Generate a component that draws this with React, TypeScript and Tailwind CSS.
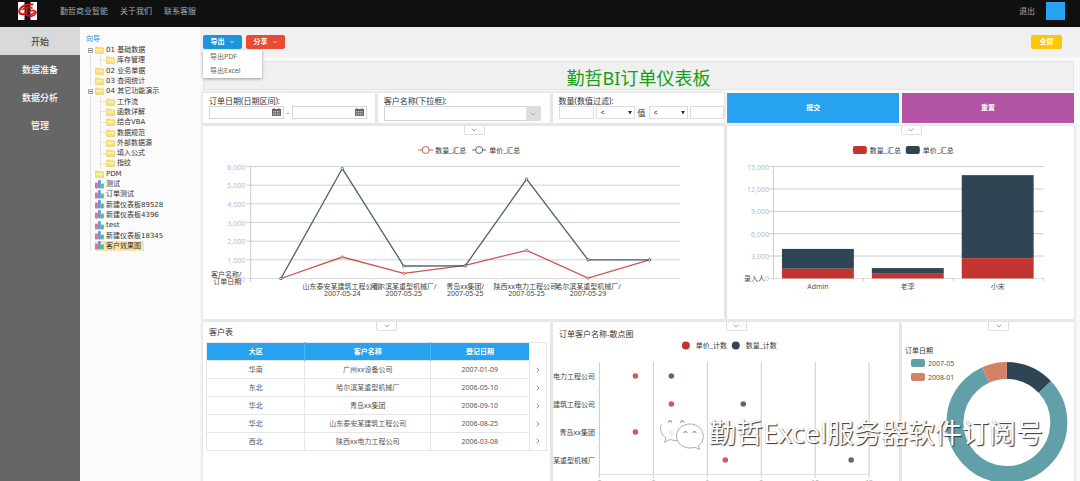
import React, { useState } from 'react';
import { ChevronDown, ChevronRight } from 'lucide-react';

const RED = '#c23531';
const NAVY = '#2f4554';
const TEAL = '#61a0a8';
const ORANGE = '#d48265';

type TreeNode = { label: string; level: 1 | 2; icon: 'folder' | 'chart'; open?: boolean; active?: boolean };

const tree: TreeNode[] = [
    { label: '01 基础数据', level: 1, icon: 'folder', open: true },
    { label: '库存管理', level: 2, icon: 'folder' },
    { label: '02 业务单据', level: 1, icon: 'folder' },
    { label: '03 查阅统计', level: 1, icon: 'folder' },
    { label: '04 其它功能演示', level: 1, icon: 'folder', open: true },
    { label: '工作流', level: 2, icon: 'folder' },
    { label: '函数详解', level: 2, icon: 'folder' },
    { label: '结合VBA', level: 2, icon: 'folder' },
    { label: '数据规范', level: 2, icon: 'folder' },
    { label: '外部数据源', level: 2, icon: 'folder' },
    { label: '填入公式', level: 2, icon: 'folder' },
    { label: '指纹', level: 2, icon: 'folder' },
    { label: 'PDM', level: 1, icon: 'folder' },
    { label: '测试', level: 1, icon: 'chart' },
    { label: '订单测试', level: 1, icon: 'chart' },
    { label: '新建仪表板89528', level: 1, icon: 'chart' },
    { label: '新建仪表板4396', level: 1, icon: 'chart' },
    { label: 'test', level: 1, icon: 'chart' },
    { label: '新建仪表板18345', level: 1, icon: 'chart' },
    { label: '客户效果图', level: 1, icon: 'chart', active: true },
];

const customers = [
    ['华南', '广州xx设备公司', '2007-01-09'],
    ['东北', '哈尔滨某重型机械厂', '2006-05-10'],
    ['华北', '青岛xx集团', '2006-09-10'],
    ['华北', '山东泰安某建筑工程公司', '2006-08-25'],
    ['西北', '陕西xx电力工程公司', '2006-03-08'],
];

const Logo = () => (
    <svg width="20" height="20" viewBox="0 0 20 20" aria-label="logo">
        <path d="M0 1h6.500v18H0zM12.500 1H19v18h-6.500z" fill="#fff" />
        <g fill="none" stroke="#e01313" strokeLinecap="round">
            <path d="M14.500 3.500C9 2 1.500 6 1.200 10.500c-.1 3 4 3.300 7.300 1.500" strokeWidth="2" />
            <path d="M4.500 8.500C7 6.500 11 6 14 7M9.500 7.500C7 11 8 15.500 11.500 14.500c2.500-.8 3.500-3 6.500-3.500" strokeWidth="1.600" />
            <path d="M11 10.500c2.500-1.500 6-1.500 7 .5-.2 2.500-3 4.500-6 4.500" strokeWidth="1.600" />
        </g>
    </svg>
);

const FolderIcon = () => (
    <svg className="shrink-0" width="9" height="8" viewBox="0 0 9 8">
        <path d="M.5 1h3l.7.8h4.300v5.700h-8z" fill="#f8e07a" stroke="#e8ca5c" strokeWidth=".6" />
        <path d="M1 3h7v1.800H1z" fill="#fdf0a8" />
    </svg>
);

const ChartIcon = () => (
    <svg className="shrink-0" width="9" height="9" viewBox="0 0 9 9">
        <rect x="0" y="2.500" width="2.800" height="6" rx=".8" fill="#ea6a80" />
        <rect x="3" y="0" width="2.800" height="8.500" rx=".8" fill="#5b9be2" />
        <rect x="6" y="3.500" width="2.800" height="5" rx=".8" fill="#4cc66c" />
    </svg>
);

const CalendarIcon = () => (
    <svg className="absolute right-[3px] top-[2px] pointer-events-none" width="9" height="8" viewBox="0 0 9 8">
        <path d="M0 1h1.500V0h1v1h4V0h1v1H9v7H0z" fill="#666" />
        <path d="M1 3.500h7M1 5.200h7M1 6.800h7" stroke="#ccc" strokeWidth=".9" strokeDasharray="1.200 .6" />
    </svg>
);

const Panel = ({ className = '', collapse = true, children }: any) => (
    <section className={`relative min-w-0 bg-white shadow-[0_0_3px_1px_#dcdcdc] ${className}`}>
        {collapse && (
            <button aria-label="collapse" className="absolute left-1/2 top-0 w-[21px] h-[9px] bg-white border border-t-0 border-[#dedede] rounded-b-xs flex items-center justify-center text-[#777]">
                <ChevronDown size={8} />
            </button>
        )}
        {children}
    </section>
);

const DateInput = ({ id, label }: { id: string; label?: string }) => (
    <div className="relative flex-1 min-w-0">
        <input id={id} aria-label={label} type="text" className="block w-full h-[13px] bg-white border border-[#d5d5d5] px-1 outline-none" />
        <CalendarIcon />
    </div>
);

const CompareSelect = ({ label }: { label: string }) => (
    <div className="relative w-[39px] shrink-0">
        <select aria-label={label} className="block appearance-none w-full h-[13px] bg-white border border-[#ddd] pl-[4px] text-[7px] leading-[11px] outline-none">
            <option>&lt;</option>
            <option>&gt;</option>
            <option>=</option>
        </select>
        <svg className="absolute right-[3px] top-[5px] pointer-events-none" width="4" height="4" viewBox="0 0 4 4">
            <path d="M0 0h4L2 3.500z" fill="#333" />
        </svg>
    </div>
);

const lineX = (i: number) => 47 + (430 / 7) * (i + 0.5);
const lineY = (v: number) => 152.5 - (v / 6000) * 112;

const LineChart = () => {
    const series = [
        { color: RED, values: [0, 1150, 270, 700, 1510, 20, 1000] },
        { color: NAVY, values: [0, 5890, 670, 680, 5320, 1000, 1000] },
    ];
    const labels = [
        ['山东泰安某建筑工程公司/', '2007-05-24'],
        ['哈尔滨某重型机械厂/', '2007-05-25'],
        ['青岛xx集团/', '2007-05-25'],
        ['陕西xx电力工程公司/', '2007-05-25'],
        ['哈尔滨某重型机械厂/', '2007-05-29'],
    ];
    return (
        <svg viewBox="0 0 521 193" className="block w-full h-full text-[7px]">
            {[0, 1, 2, 3, 4, 5, 6].map((n) => (
                <g key={n}>
                    <path d={`M43 ${lineY(n * 1000)}H477`} stroke={n ? '#ccd2d6' : '#ddd'} />
                    <text x="42" y={lineY(n * 1000) + 3} textAnchor="end" fill="#bbb">{n ? `${n},000` : '0'}</text>
                </g>
            ))}
            <path d="M47.500 40V156" stroke="#ccc" />
            {[1, 2, 3, 4, 5, 6].map((n) => (
                <path key={n} d={`M${47 + (430 / 7) * n} 152v3`} stroke="#ddd" />
            ))}
            {series.map((s) => (
                <g key={s.color} stroke={s.color}>
                    <polyline points={s.values.map((v, i) => `${lineX(i)},${lineY(v)}`).join(' ')} fill="none" strokeWidth="1.300" strokeOpacity=".85" />
                    {s.values.map((v, i) => (
                        <circle key={i} cx={lineX(i)} cy={lineY(v)} r="1.200" fill="#fff" strokeWidth=".7" />
                    ))}
                </g>
            ))}
            <g textAnchor="middle" fill="#444">
                <text x="23" y="151">客户名称/</text>
                <text x="24" y="158">订单日期</text>
                {labels.map((l, i) => (
                    <g key={i}>
                        <text x={lineX(i + 1)} y="163">{l[0]}</text>
                        <text x={lineX(i + 1)} y="170">{l[1]}</text>
                    </g>
                ))}
            </g>
            <path d="M215 24h15" stroke={RED} strokeWidth=".8" />
            <circle cx="222.500" cy="24" r="3.500" fill="#fff" stroke={RED} strokeWidth=".8" />
            <path d="M269 24h14" stroke={NAVY} strokeWidth=".8" />
            <circle cx="276" cy="24" r="3.500" fill="#fff" stroke={NAVY} strokeWidth=".8" />
            <g fill="#333">
                <text x="232" y="27">数量_汇总</text>
                <text x="286" y="27">单价_汇总</text>
            </g>
        </svg>
    );
};

const barY = (v: number) => 152.5 - (v / 15000) * 112;

const BarChart = () => {
    const bars = [
        { name: 'Admin', qty: 1300, total: 3960 },
        { name: '老李', qty: 720, total: 1390 },
        { name: '小宋', qty: 2720, total: 13850 },
    ];
    return (
        <svg viewBox="0 0 347 193" className="block w-full h-full text-[7px]">
            {[0, 3, 6, 9, 12, 15].map((n) => (
                <g key={n}>
                    <path d={`M42 ${barY(n * 1000)}H317`} stroke={n ? '#ccc' : '#ddd'} />
                    <text x="42" y={barY(n * 1000) + 3} textAnchor="end" fill="#bbb">{n ? `${n},000` : '0'}</text>
                </g>
            ))}
            <path d="M46.500 40v114M136.500 152v3M226.500 152v3M316.500 152v3" stroke="#ccc" />
            {bars.map((b, i) => (
                <g key={b.name}>
                    <rect x={55 + i * 90} width="72" y={barY(b.total)} height={barY(b.qty) - barY(b.total)} fill={NAVY} />
                    <rect x={55 + i * 90} width="72" y={barY(b.qty)} height={152.5 - barY(b.qty)} fill={RED} />
                    <text x={91 + i * 90} y="163" textAnchor="middle" fill="#555">{b.name}</text>
                </g>
            ))}
            <text x="38" y="155" textAnchor="end" fill="#444">录入人</text>
            <rect x="126" y="20" width="14" height="8" rx="2" fill={RED} />
            <rect x="179" y="20" width="14" height="8" rx="2" fill={NAVY} />
            <g fill="#333">
                <text x="143" y="27">数量_汇总</text>
                <text x="196" y="27">单价_汇总</text>
            </g>
        </svg>
    );
};

const ScatterChart = () => {
    const rows = [
        { name: '电力工程公司', price: 2, qty: 4 },
        { name: '建筑工程公司', price: 4, qty: 8 },
        { name: '青岛xx集团', price: 2, qty: 4 },
        { name: '某重型机械厂', price: 7, qty: 14 },
    ];
    return (
        <svg viewBox="0 0 347 200" className="block w-full h-full text-[7px]">
            {[0, 3, 6, 9, 12, 15].map((n) => (
                <g key={n}>
                    <path d={`M${46.5 + n * 18} 40V156`} stroke="#ccc" />
                    <text x={46.5 + n * 18} y="163" textAnchor="middle" fill="#aaa">{n}</text>
                </g>
            ))}
            <path d="M44 152.500H317M44 68.500h3M44 96.500h3M44 124.500h3" stroke="#ddd" />
            {rows.map((r, i) => (
                <g key={r.name}>
                    <text x="42" y={57 + i * 28} textAnchor="end" fill="#444">{r.name}</text>
                    <circle cx={46.5 + r.qty * 18} cy={54 + i * 28} r="2.800" fill={NAVY} fillOpacity=".8" />
                    <circle cx={46.5 + r.price * 18} cy={54 + i * 28} r="2.800" fill={RED} fillOpacity=".8" />
                </g>
            ))}
            <text x="6" y="15" fontSize="8" fill="#333">订单客户名称-散点图</text>
            <circle cx="133" cy="23.500" r="4" fill={RED} />
            <circle cx="183" cy="23.500" r="4" fill={NAVY} />
            <g fill="#333">
                <text x="143" y="26">单价_计数</text>
                <text x="193" y="26">数量_计数</text>
            </g>
        </svg>
    );
};

const DonutChart = () => {
    const slices = [
        { color: NAVY, from: 0, deg: 47 },
        { color: TEAL, from: 47, deg: 289 },
        { color: ORANGE, from: 336, deg: 24 },
    ];
    return (
        <svg viewBox="0 0 172 200" className="block w-full h-full text-[7px]">
            {slices.map((s) => (
                <circle key={s.color} cx="105" cy="100.500" r="52" fill="none" stroke={s.color} strokeWidth="17" pathLength="360" strokeDasharray={`${s.deg} ${360 - s.deg}`} transform={`rotate(${s.from - 90} 105 100.5)`} />
            ))}
            <text x="3" y="31" fill="#333">订单日期</text>
            <rect x="9" y="37" width="14" height="8" rx="2" fill={TEAL} />
            <rect x="9" y="51" width="14" height="8" rx="2" fill={ORANGE} />
            <g fill="#555">
                <text x="26" y="44">2007-05</text>
                <text x="26" y="58">2008-01</text>
            </g>
        </svg>
    );
};

const Watermark = () => (
    <div className="absolute left-[659px] top-[413px] flex items-center gap-[5px] pointer-events-none">
        <svg width="45" height="38" viewBox="0 0 45 38">
            <g stroke="#999" strokeWidth=".8" strokeLinejoin="round">
                <path d="M17 2C8 2 1.500 7.500 1.500 14.500c0 4 2 7 5.500 9.500l-1.500 4.500 5.500-3c2 .6 4 1 6 1C26 26.500 32.500 21 32.500 14S26 2 17 2z" fill="#fff" strokeDasharray="0 18 48 60" />
                <circle cx="12.500" cy="19" r="2.500" fill="#eee" stroke="none" />
                <path d="M31 10c-7.500 0-13.500 5-13.500 12S23.500 34 31 34c1.700 0 3.300-.3 5-.8l4.500 2.300-1.200-3.800c3-2.200 5-5.500 5-9.200C44.300 15 38 10 31 10z" fill="#fff" />
            </g>
            <g fill="none" stroke="#777" strokeWidth="1">
                <path d="M9.500 8.500a1.700 1.700 0 0 1 3.400 0M21.500 8.500a1.700 1.700 0 0 1 3.400 0M25 19a1.500 1.500 0 0 1 3 0M34 19a1.500 1.500 0 0 1 3 0" />
            </g>
        </svg>
        <span className="text-[27px] leading-[40px] text-white whitespace-nowrap [text-shadow:1px_1px_1px_#333,0_0_1px_#aaa]">勤哲Excel服务器软件订阅号</span>
    </div>
);

const App = () => {
    const [menuOpen, setMenuOpen] = useState(true);
    const [section, setSection] = useState('开始');

    return (
        <div lang="zh-CN" className="relative h-screen overflow-hidden flex flex-col bg-white text-[7px] text-[#333] font-['Noto_Sans','Noto_Sans_CJK_SC',sans-serif]">
            <header className="h-[27px] shrink-0 bg-[#101010] text-[#a8a8a8] text-[8px] leading-[10px] flex items-center pb-[6px] pl-[18px] pr-[15px]">
                <Logo />
                <nav className="flex gap-3 ml-[22px]">
                    <a href="#bi">勤哲商业智能</a>
                    <a href="#about">关于我们</a>
                    <a href="#contact">联系客服</a>
                </nav>
                <a href="#logout" className="ml-auto mr-[11px]">退出</a>
                <div className="w-[19px] h-[18px] bg-[#27a2f0]"></div>
            </header>

            <div className="flex flex-1 min-h-0">
                <nav className="w-[80px] shrink-0 bg-[#666] flex flex-col text-[9px] font-medium text-white">
                    {['开始', '数据准备', '数据分析', '管理'].map((s) => (
                        <button key={s} onClick={() => setSection(s)} className={`h-[28px] pt-px cursor-pointer ${s === section ? 'bg-[#d9d9d9] text-[#444]' : ''}`}>{s}</button>
                    ))}
                </nav>

                <aside className="w-[120px] shrink-0 bg-[#fbfbfb] pl-[6px] pt-[6px] font-['DejaVu_Sans','Noto_Sans_CJK_SC',sans-serif]">
                    <div className="leading-[12px] text-[#1b95e0]">向导</div>
                    <ul className="grid auto-rows-fr h-[206px]">
                        {tree.map((n) => (
                            <li key={n.label} className="flex items-stretch leading-[10px] whitespace-nowrap">
                                <span className="w-[9px] shrink-0 flex items-center">
                                    {n.open ? (
                                        <span className="w-[5px] h-[5px] ml-[2px] border border-[#aaa] flex items-center"><span className="w-full h-px bg-[#777]"></span></span>
                                    ) : (
                                        <span className="ml-1 h-full w-px bg-[#e2e2e2]"></span>
                                    )}
                                </span>
                                {n.level === 2 && (
                                    <span className="w-[11px] shrink-0 flex items-center">
                                        <span className="ml-[5px] h-full w-px bg-[#e2e2e2]"></span>
                                        <span className="flex-1 h-px bg-[#e2e2e2]"></span>
                                    </span>
                                )}
                                <a href="#node" className={`flex items-center gap-[2px] pr-[3px] ${n.active ? 'bg-[#fde3a7]' : ''}`}>
                                    {n.icon === 'folder' ? <FolderIcon /> : <ChartIcon />}
                                    {n.label}
                                </a>
                            </li>
                        ))}
                    </ul>
                </aside>

                <main className="flex-1 min-w-0 bg-[#fafafa]">
                    <div className="h-[30px] bg-[#f0f0f0] pl-[3px] pr-[18px] pt-2 flex items-start gap-1 text-white font-bold">
                        <div className="relative">
                            <button onClick={() => setMenuOpen(!menuOpen)} className="h-[14px] w-[39px] bg-[#1b95e0] rounded-xs flex items-center justify-center gap-1">
                                导出 <ChevronDown size={6} strokeWidth={3} />
                            </button>
                            {menuOpen && (
                                <ul className="absolute z-10 left-0 top-[15px] w-[59px] bg-white shadow-[0_1px_3px_#999] font-normal text-[#666]">
                                    <li className="h-[14px]"><button className="pl-[7px] leading-[14px]">导出PDF</button></li>
                                    <li className="h-[14px]"><button className="pl-[7px] leading-[14px]">导出Excel</button></li>
                                </ul>
                            )}
                        </div>
                        <button className="h-[14px] w-[39px] bg-[#e94b35] rounded-xs flex items-center justify-center gap-1">
                            分享 <ChevronDown size={6} strokeWidth={3} />
                        </button>
                        <button className="ml-auto h-[14px] w-[31px] bg-[#fcc70a] rounded-xs">全屏</button>
                    </div>

                    <div className="grid grid-cols-5 gap-[3px] pt-[4px] pl-[3px] pr-[6px]">
                        <h1 className="col-span-5 h-[29px] leading-[33px] bg-[#f0f0f0] border border-[#e4e4e4] text-center text-[18px] text-[#14a014]">勤哲BI订单仪表板</h1>

                        <Panel collapse={false} className="h-[30px] px-[6px] pt-[3px]">
                            <label htmlFor="from" className="block mb-px text-[8px] leading-[9px]">订单日期(日期区间):</label>
                            <div className="flex items-center gap-[3px] pr-[2px] leading-[13px]">
                                <DateInput id="from" />
                                -
                                <DateInput id="to" label="结束日期" />
                            </div>
                        </Panel>
                        <Panel collapse={false} className="h-[30px] px-[6px] pt-[3px]">
                            <label htmlFor="customer" className="block mb-px text-[8px] leading-[9px]">客户名称(下拉框):</label>
                            <div className="relative mr-[3px]">
                                <select id="customer" className="block appearance-none w-full h-[15px] bg-white border border-[#d5d5d5] outline-none">
                                    <option></option>
                                </select>
                                <span className="absolute right-0 top-0 w-[15px] h-[15px] bg-[#ddd] flex items-center justify-center text-[#888] pointer-events-none">
                                    <ChevronDown size={8} />
                                </span>
                            </div>
                        </Panel>
                        <Panel collapse={false} className="h-[30px] pl-[6px] pt-[3px]">
                            <label htmlFor="min" className="block mb-px text-[8px] leading-[9px]">数量(数值过滤):</label>
                            <div className="flex items-center gap-[2px] leading-[13px]">
                                <input id="min" type="text" className="flex-1 min-w-0 h-[13px] bg-white border border-[#ddd] outline-none" />
                                <CompareSelect label="下限比较" />
                                <span className="text-[8px] px-px">值</span>
                                <CompareSelect label="上限比较" />
                                <input aria-label="上限" type="text" className="flex-1 min-w-0 h-[13px] bg-white border border-[#ddd] outline-none" />
                            </div>
                        </Panel>
                        <button className="h-[30px] bg-[#27a2f0] text-white font-bold">提交</button>
                        <button className="h-[30px] bg-[#b253a4] text-white font-bold">重置</button>

                        <Panel className="col-span-3 h-[193px]"><LineChart /></Panel>
                        <Panel className="col-span-2 h-[193px]"><BarChart /></Panel>

                        <Panel className="col-span-2 h-[200px] px-[3px]">
                            <h2 className="pl-[3px] text-[8px] leading-[20px]">客户表</h2>
                            <table className="w-full table-fixed border-collapse border border-[#e6e6e6] text-center leading-[10px] text-[#555]">
                                <thead>
                                    <tr className="h-[18px] text-white">
                                        <th className="w-[29%] bg-[#27a2f0] border-r border-[#4cb3f4]">大区</th>
                                        <th className="w-[37%] bg-[#27a2f0] border-r border-[#4cb3f4]">客户名称</th>
                                        <th className="w-[29%] bg-[#27a2f0]">登记日期</th>
                                        <th className="w-[5%]"></th>
                                    </tr>
                                </thead>
                                <tbody>
                                    {customers.map((c) => (
                                        <tr key={c[1]} className="h-[18px]">
                                            {c.map((v) => (
                                                <td key={v} className="border border-[#e6e6e6]">{v}</td>
                                            ))}
                                            <td><ChevronRight size={8} className="mx-auto" /></td>
                                        </tr>
                                    ))}
                                </tbody>
                            </table>
                        </Panel>
                        <Panel className="col-span-2 h-[200px]"><ScatterChart /></Panel>
                        <Panel className="h-[200px]"><DonutChart /></Panel>
                    </div>
                </main>
            </div>

            <Watermark />
        </div>
    );
};

export default App;
